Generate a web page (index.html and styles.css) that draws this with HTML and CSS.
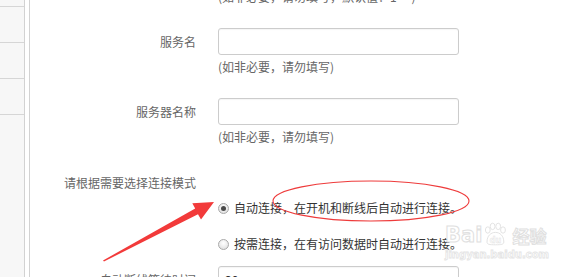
FILE: index.html
```html
<!DOCTYPE html>
<html lang="zh-CN">
<head>
<meta charset="utf-8">
<title>连接设置</title>
<link rel="stylesheet" href="styles.css">
</head>
<body>
<div class="page">
  <aside class="sidebar">
    <div class="side-item first"></div>
    <div class="side-item"></div>
    <div class="side-item"></div>
    <div class="side-item"></div>
  </aside>
  <main class="main">
    <div class="row hint-row top-hint">
      <div class="label"></div>
      <div class="hint">(如非必要，请勿填写，默认值：1 ·)</div>
    </div>
    <div class="row field-row first-field">
      <div class="label">服务名</div>
      <div class="input"></div>
    </div>
    <div class="row hint-row">
      <div class="label"></div>
      <div class="hint">(如非必要，请勿填写)</div>
    </div>
    <div class="row field-row">
      <div class="label">服务器名称</div>
      <div class="input"></div>
    </div>
    <div class="row hint-row">
      <div class="label"></div>
      <div class="hint">(如非必要，请勿填写)</div>
    </div>
    <div class="row mode-row">
      <div class="label">请根据需要选择连接模式</div>
    </div>
    <div class="row radio-row first-radio">
      <div class="label"></div>
      <div class="radio checked"></div>
      <div class="radio-text">自动连接，在开机和断线后自动进行连接。</div>
    </div>
    <div class="row radio-row second-radio">
      <div class="label"></div>
      <div class="radio"></div>
      <div class="radio-text">按需连接，在有访问数据时自动进行连接。</div>
    </div>
    <div class="row field-row last-field">
      <div class="label">自动断线等待时间</div>
      <div class="input"><span class="value">30</span></div>
    </div>
  </main>
</div>

<svg class="annot" width="581" height="277" viewBox="0 0 581 277" xmlns="http://www.w3.org/2000/svg">
  <ellipse cx="371" cy="201" rx="98" ry="20" fill="none" stroke="#ee3b3b" stroke-width="1.1"/>
  <polygon points="103,260.5 195.2,208.4 192.3,203.2 214,202 201,219.6 198,214.2 104,261.5" fill="#f23a3a"/>
</svg>

<div class="watermark">
  <div class="wm-top"><span class="wm-bai">Bai</span><svg class="wm-paw" width="24" height="24" viewBox="0 0 30 28" xmlns="http://www.w3.org/2000/svg">
      <g fill="#fff" stroke="#e2e2e2" stroke-width="1.2">
        <ellipse cx="6" cy="9" rx="3" ry="4"/>
        <ellipse cx="12" cy="4.5" rx="3" ry="4"/>
        <ellipse cx="19" cy="4.5" rx="3" ry="4"/>
        <ellipse cx="25" cy="9" rx="3" ry="4"/>
        <path d="M5 24 C5 16 10 12 15.5 12 C21 12 26 16 26 24 C26 27 23 27.5 15.5 27.5 C8 27.5 5 27 5 24 Z"/>
      </g>
      <text x="15.5" y="25" text-anchor="middle" class="wm-du">du</text>
    </svg><span class="wm-jy">经验</span></div>
  <div class="wm-url">jingyan.baidu.com</div>
</div>
</body>
</html>
```
FILE: styles.css
```css
html, body {
  margin: 0;
  padding: 0;
  background: #ffffff;
  width: 581px;
  height: 277px;
  overflow: hidden;
  font-family: "Noto Sans CJK SC", "Liberation Sans", sans-serif;
  font-size: 12px;
}

.page {
  display: flex;
  gap: 4px;
  height: 277px;
  overflow: hidden;
}

.sidebar {
  width: 24px;
  flex: 0 0 24px;
  background: #f7f7f7;
  border-right: 1px solid #d2d2d2;
  display: flex;
  flex-direction: column;
}

.side-item {
  height: 35px;
  border-bottom: 1px solid #d6d6d6;
}

.side-item.first {
  height: 6px;
}

.main {
  flex: 1;
  border-left: 1px solid #d2d2d2;
  display: flex;
  flex-direction: column;
}

.row {
  display: flex;
  align-items: center;
  line-height: 16px;
}

.label {
  width: 166px;
  flex: 0 0 166px;
  margin-right: 22px;
  text-align: right;
  color: #666666;
  white-space: nowrap;
}

.hint {
  color: #666666;
  white-space: nowrap;
}

.field-row {
  margin-top: 23px;
}

.hint-row {
  margin-top: 4px;
}

.top-hint.hint-row {
  margin-top: -11px;
}

.field-row.first-field {
  margin-top: 23px;
}

.input {
  width: 233px;
  height: 25px;
  border: 1px solid #cccccc;
  border-radius: 3px;
  background: #ffffff;
  box-shadow: inset 0 1px 1px rgba(0, 0, 0, 0.04);
  display: flex;
  align-items: center;
  padding-left: 6px;
  box-sizing: content-box;
}

.value {
  color: #333333;
}

.mode-row {
  margin-top: 30px;
}

.radio-row {
  margin-top: 20px;
}

.radio-row.first-radio {
  margin-top: 9px;
}

.radio-row .label {
  margin-right: 0;
  width: 188px;
  flex-basis: 188px;
}

.radio {
  width: 11px;
  height: 11px;
  border: 1px solid #a9a9a9;
  border-radius: 50%;
  background: radial-gradient(circle at 50% 35%, #ffffff 0%, #f1f1f1 40%, #d8d8d8 100%);
  margin-right: 5px;
  display: flex;
  align-items: center;
  justify-content: center;
  box-sizing: border-box;
}

.radio.checked::after {
  content: "";
  width: 5px;
  height: 5px;
  border-radius: 50%;
  background: #4a4a4a;
}

.radio-text {
  color: #333333;
  white-space: nowrap;
}

.last-field {
  margin-top: 14px;
}

.annot {
  position: absolute;
  left: 0;
  top: 0;
  pointer-events: none;
}

.watermark {
  position: absolute;
  left: 445px;
  top: 222px;
  width: 136px;
  pointer-events: none;
  white-space: nowrap;
}

.wm-top {
  height: 26px;
  line-height: 26px;
  white-space: nowrap;
}

.wm-bai {
  display: inline-block;
  vertical-align: bottom;
  font-family: "DejaVu Sans", sans-serif;
  font-weight: bold;
  font-size: 21px;
  line-height: 26px;
  color: #ffffff;
  -webkit-text-stroke: 1px #e0e0e0;
}

.wm-paw {
  display: inline-block;
  vertical-align: bottom;
  margin: 0 0 2px 1px;
}

.wm-du {
  font-family: "DejaVu Sans", sans-serif;
  font-weight: bold;
  font-size: 10px;
  fill: #ffffff;
  stroke: #e2e2e2;
  stroke-width: 0.6;
}

.wm-jy {
  display: inline-block;
  vertical-align: bottom;
  font-size: 17px;
  line-height: 24px;
  font-weight: bold;
  color: #ffffff;
  -webkit-text-stroke: 1px #e0e0e0;
  margin-left: 5px;
}

.wm-url {
  font-family: "DejaVu Sans", sans-serif;
  font-size: 10px;
  font-weight: bold;
  line-height: 13px;
  color: #ffffff;
  -webkit-text-stroke: 0.8px #e4e4e4;
}
```
